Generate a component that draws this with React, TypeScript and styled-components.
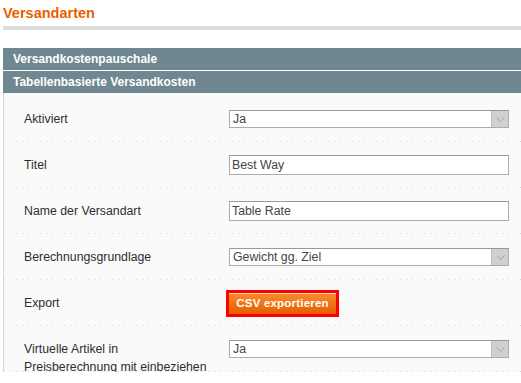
import React from 'react';
import styled, { createGlobalStyle } from 'styled-components';

const GlobalStyle = createGlobalStyle`
  html, body {
    margin: 0;
    padding: 0;
    background: #ffffff;
    font-family: "Liberation Sans", Arial, sans-serif;
    overflow: hidden;
  }
`;

const Page = styled.div`
  padding-left: 3px;
  width: 540px;
`;

const Title = styled.h3`
  margin: 0;
  padding-top: 4px;
  height: 22px;
  font-size: 14.5px;
  line-height: 18px;
  font-weight: bold;
  color: #eb5e00;
`;

const Rule = styled.div`
  height: 4px;
  background: #dcdcdc;
  margin-bottom: 18px;
`;

const SectionHead = styled.div`
  height: 22px;
  line-height: 22px;
  padding-left: 10px;
  margin-bottom: 1px;
  background: #6f8791;
  color: #ffffff;
  font-size: 12px;
  font-weight: bold;
`;

const Body = styled.div`
  margin-top: -1px;
  padding-top: 3px;
  border-left: 1px solid #d8d8d8;
  background: #fafafa;
`;

const Row = styled.div<{ $top?: boolean }>`
  display: grid;
  grid-template-columns: 205px 280px;
  height: 46px;
  box-sizing: border-box;
  padding-left: 20px;
  padding-top: ${(p) => (p.$top ? '14px' : '0')};
  align-items: ${(p) => (p.$top ? 'start' : 'center')};
  background-image: linear-gradient(to right, #d6d6d6 1px, transparent 1px);
  background-size: 6px 1px;
  background-repeat: repeat-x;
  background-position: 0 bottom;
`;

const Label = styled.label`
  font-size: 12.3px;
  line-height: 18px;
  color: #2e2e2e;
`;

const SelectBox = styled.div`
  position: relative;
  height: 18px;
  box-sizing: border-box;
  border: 1px solid #acacac;
  border-top-color: #999999;
  background: #ffffff;
  padding-left: 3px;
  font-size: 12.3px;
  line-height: 16px;
  color: #444444;
`;

const Arrow = styled.span`
  position: absolute;
  right: 0;
  top: 0;
  width: 17px;
  height: 16px;
  box-sizing: border-box;
  border-left: 1px solid #c0c0c0;
  background: #d0d0d0;
  display: flex;
  align-items: center;
  justify-content: center;
`;

const TextInput = styled.input`
  height: 20px;
  box-sizing: border-box;
  width: 280px;
  border: 1px solid #acacac;
  border-top-color: #999999;
  background: #ffffff;
  padding: 0 2px;
  margin: 0;
  font-family: "Liberation Sans", Arial, sans-serif;
  font-size: 12.3px;
  color: #444444;
  outline: none;
`;

const ExportButton = styled.button`
  justify-self: start;
  margin-left: -3px;
  width: 113px;
  height: 27px;
  box-sizing: border-box;
  border: 3px solid #ff0000;
  padding: 0;
  background: linear-gradient(#fa8d2e, #e85c00);
  box-shadow: inset 0 1px 0 #fbd3b0;
  color: #ffffff;
  font-family: "Liberation Sans", Arial, sans-serif;
  font-size: 11.5px;
  font-weight: bold;
  letter-spacing: 0.2px;
  cursor: pointer;
`;

const Chevron = () => (
  <svg width="9" height="5" viewBox="0 0 9 5">
    <path d="M0.5 0.5 L4.5 4.5 L8.5 0.5" fill="none" stroke="#a0a0a0" strokeWidth="1" />
  </svg>
);

const Select = ({ value }: { value: string }) => (
  <SelectBox>
    {value}
    <Arrow>
      <Chevron />
    </Arrow>
  </SelectBox>
);

const App = () => {
  return (
    <Page>
      <GlobalStyle />
      <Title>Versandarten</Title>
      <Rule />
      <SectionHead>Versandkostenpauschale</SectionHead>
      <SectionHead>Tabellenbasierte Versandkosten</SectionHead>
      <Body>
        <Row>
          <Label>Aktiviert</Label>
          <Select value="Ja" />
        </Row>
        <Row>
          <Label>Titel</Label>
          <TextInput defaultValue="Best Way" />
        </Row>
        <Row>
          <Label>Name der Versandart</Label>
          <TextInput defaultValue="Table Rate" />
        </Row>
        <Row>
          <Label>Berechnungsgrundlage</Label>
          <Select value="Gewicht gg. Ziel" />
        </Row>
        <Row>
          <Label>Export</Label>
          <ExportButton>CSV exportieren</ExportButton>
        </Row>
        <Row $top>
          <Label>
            Virtuelle Artikel in
            <br />
            Preisberechnung mit einbeziehen
          </Label>
          <Select value="Ja" />
        </Row>
      </Body>
    </Page>
  );
};

export default App;
